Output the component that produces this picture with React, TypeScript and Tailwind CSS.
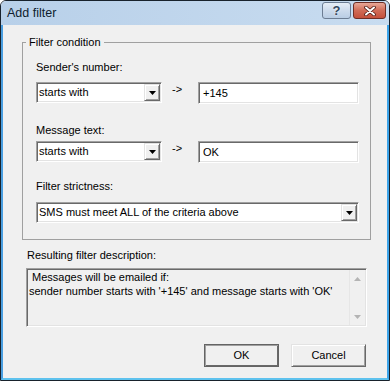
import React from "react";

const sunken =
  "border border-t-[#a0a0a0] border-l-[#a0a0a0] border-b-white border-r-white shadow-[inset_1px_1px_0_#696969,inset_-1px_-1px_0_#e3e3e3]";

const Combo = ({ value, className }: { value: string; className: string }) => (
  <div className={`flex h-[21px] items-center bg-white ${sunken} ${className}`}>
    <span className="flex-1 truncate pl-[2px]">{value}</span>
    <div className="mr-[1px] flex h-[17px] w-[16px] items-center justify-center border border-t-[#e3e3e3] border-l-[#e3e3e3] border-b-[#696969] border-r-[#696969] bg-[#f0f0f0] shadow-[inset_1px_1px_0_#fff,inset_-1px_-1px_0_#a0a0a0]">
      <svg width="7" height="4" viewBox="0 0 7 4">
        <path d="M0 0h7L3.5 4z" fill="#000" />
      </svg>
    </div>
  </div>
);

const Edit = ({ value }: { value: string }) => (
  <div className={`flex h-[22px] flex-1 items-center bg-white pl-[4px] ${sunken}`}>{value}</div>
);

const ConditionRow = ({ value }: { value: string }) => (
  <div className="flex items-start">
    <Combo value="starts with" className="w-[126px]" />
    <span className="w-[36px] pl-[10px] pt-[1px]">-&gt;</span>
    <Edit value={value} />
  </div>
);

export default function App() {
  return (
    <div className="flex h-[381px] w-[390px] flex-col overflow-hidden rounded-t-[6px] border border-[#18222c] font-['Liberation_Sans',Arial,sans-serif] text-[11px] leading-[13px] text-black">
      {/* title bar */}
      <div className="flex h-[24px] shrink-0 items-start bg-gradient-to-r from-[#b8d0e9] to-[#c8dcf0]">
        <span className="ml-[6px] mt-[4px] flex-1 text-[12.5px] leading-[16px] text-[#0f1d2e]">Add filter</span>
        <button className="mt-[1px] flex h-[17px] w-[29px] items-center justify-center rounded-[3px] border border-[#6c7d93] bg-gradient-to-b from-[#e6eef7] via-[#cddbec] to-[#b9cde4] text-[13px] font-bold leading-none text-[#33475e] [text-shadow:0_0_2px_#fff]">
          ?
        </button>
        <button className="ml-[2px] mr-[3px] mt-[1px] flex h-[17px] w-[33px] items-center justify-center rounded-[3px] border border-[#6e2e25] bg-gradient-to-b from-[#e8a898] via-[#d06b56] to-[#c4503b]">
          <svg width="12" height="10" viewBox="0 0 12 10">
            <path d="M2 1.5l8 7M10 1.5l-8 7" stroke="#4a1a14" strokeWidth="3.6" strokeLinecap="round" />
            <path d="M2 1.5l8 7M10 1.5l-8 7" stroke="#fff" strokeWidth="2" strokeLinecap="round" />
          </svg>
        </button>
      </div>

      {/* client area */}
      <div className="flex flex-1 flex-col border-x-2 border-b-2 border-l-[#4a9ee0] border-r-[#3ca4ea] border-b-[#5ec2ee] bg-[#f0f0f0]">
        <fieldset className="ml-[19px] mr-[16px] mt-[11px] border border-[#a0a0a0]">
          <legend className="ml-[3px] px-[3px]">Filter condition</legend>
          <div className="flex flex-col pb-[16px] pl-[13px] pr-[11px] pt-[12px]">
            <span>Sender's number:</span>
            <div className="mt-[8px]">
              <ConditionRow value="+145" />
            </div>
            <span className="mt-[20px]">Message text:</span>
            <div className="mt-[4px]">
              <ConditionRow value="OK" />
            </div>
            <span className="mt-[17px]">Filter strictness:</span>
            <Combo value="SMS must meet ALL of the criteria above" className="mt-[9px] w-full" />
          </div>
        </fieldset>

        <span className="ml-[24px] mt-[9px]">Resulting filter description:</span>
        <div className={`ml-[23px] mr-[20px] mt-[6px] flex h-[59px] bg-[#f0f0f0] ${sunken}`}>
          <div className="flex-1 pl-[2px] pt-[1px] leading-[14px]">
            <p className="pl-[3px]">Messages will be emailed if:</p>
            <p>sender number starts with '+145' and message starts with 'OK'</p>
          </div>
          <div className="my-[1px] mr-[1px] flex w-[16px] flex-col justify-between border-l border-[#e6e6e6]">
            <div className="flex h-[17px] items-center justify-center">
              <svg width="7" height="4" viewBox="0 0 7 4">
                <path d="M0 4h7L3.5 0z" fill="#b4b4b4" />
              </svg>
            </div>
            <div className="flex h-[17px] items-center justify-center">
              <svg width="7" height="4" viewBox="0 0 7 4">
                <path d="M0 0h7L3.5 4z" fill="#b4b4b4" />
              </svg>
            </div>
          </div>
        </div>

        <div className="mr-[21px] mt-[17px] flex justify-end gap-[12px]">
          <button className="flex h-[23px] w-[75px] items-center justify-center border border-[#646464] bg-[#f0f0f0] shadow-[inset_1px_1px_0_#a0a0a0,inset_-1px_-1px_0_#696969]">
            OK
          </button>
          <button className="flex h-[23px] w-[75px] items-center justify-center border border-t-[#e3e3e3] border-l-[#e3e3e3] border-b-[#696969] border-r-[#696969] bg-[#f0f0f0] shadow-[inset_1px_1px_0_#fff,inset_-1px_-1px_0_#a0a0a0]">
            Cancel
          </button>
        </div>
      </div>
    </div>
  );
}
